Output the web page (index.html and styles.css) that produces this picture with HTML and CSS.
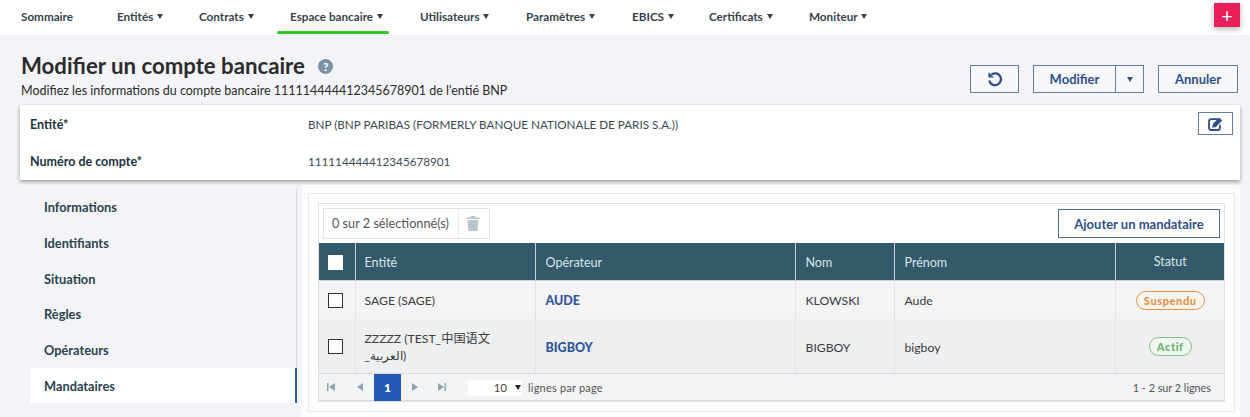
FILE: index.html
```html
<!DOCTYPE html>
<html lang="fr">
<head>
<meta charset="utf-8">
<title>Modifier un compte bancaire</title>
<link rel="stylesheet" href="styles.css">
</head>
<body>
<nav class="nav">
  <a class="nav-item nav-first">Sommaire</a>
  <a class="nav-item nav-ent">Entités <i class="tri"></i></a>
  <a class="nav-item nav-con">Contrats <i class="tri"></i></a>
  <a class="nav-item nav-esp active">Espace bancaire <i class="tri"></i></a>
  <a class="nav-item nav-uti">Utilisateurs <i class="tri"></i></a>
  <a class="nav-item nav-par">Paramètres <i class="tri"></i></a>
  <a class="nav-item nav-ebi">EBICS <i class="tri"></i></a>
  <a class="nav-item nav-cer">Certificats <i class="tri"></i></a>
  <a class="nav-item nav-mon">Moniteur <i class="tri"></i></a>
  <button class="plus" type="button">+</button>
</nav>
<header class="head">
  <div class="head-text">
    <h1 class="title">Modifier un compte bancaire <span class="help">?</span></h1>
    <p class="sub">Modifiez les informations du compte bancaire 111114444412345678901 de l'entié BNP</p>
  </div>
  <div class="actions">
    <button class="btn btn-reset" type="button" aria-label="Rétablir">
      <svg width="16" height="16" viewBox="0 0 16 16" fill="none" stroke="#2f4f86" stroke-width="2.300"><path d="M4.300 3.700A5.900 5.900 0 1 1 2.300 9.400"/><path d="M1.400 1.200l5.600 5.400H1.400z" fill="#2f4f86" stroke="none"/></svg>
    </button>
    <div class="split">
      <button class="btn btn-mod" type="button">Modifier</button>
      <button class="btn btn-caret" type="button"><i class="tri tri-blue"></i></button>
    </div>
    <button class="btn btn-ann" type="button">Annuler</button>
  </div>
</header>
<section class="card">
  <div class="card-row row-a">
    <span class="label">Entité*</span>
    <span class="value">BNP (BNP PARIBAS (FORMERLY BANQUE NATIONALE DE PARIS S.A.))</span>
    <button class="edit" type="button" aria-label="Éditer">
      <svg width="15" height="14" viewBox="0 0 15 14"><path d="M9.800 2.200H3.200C2 2.200 1 3.200 1 4.400v6.400C1 12 2 13 3.200 13h6.600c1.200 0 2.200-1 2.200-2.200V7.800" fill="none" stroke="#2f4f86" stroke-width="1.800"/><path d="M4.800 6.900L11.200.6l3 3-6.300 6.300-3.600.8z" fill="#2f4f86"/></svg>
    </button>
  </div>
  <div class="card-row row-b">
    <span class="label">Numéro de compte*</span>
    <span class="value">111114444412345678901</span>
  </div>
</section>
<main class="content">
  <aside class="side">
    <a class="side-item">Informations</a>
    <a class="side-item">Identifiants</a>
    <a class="side-item">Situation</a>
    <a class="side-item">Règles</a>
    <a class="side-item">Opérateurs</a>
    <a class="side-item current">Mandataires</a>
  </aside>
  <div class="pane">
    <div class="panel">
      <div class="grid-box">
        <div class="toolbar">
          <div class="selbox">
            <span class="seltext">0 sur 2 sélectionné(s)</span>
            <span class="seltrash">
              <svg width="14" height="15" viewBox="0 0 14 15" fill="#b9c5cc"><path d="M5 0h4l.6 1.400H13.400v1.600H.600V1.400H4.400z"/><path d="M1.600 4h10.800l-.8 10.200c0 .4-.4.800-.8.800H3.200c-.4 0-.8-.4-.8-.8z"/></svg>
            </span>
          </div>
          <button class="add" type="button">Ajouter un mandataire</button>
        </div>
        <table class="tbl">
          <thead>
            <tr>
              <th class="c-chk"><span class="chk chk-head"></span></th>
              <th class="c-ent">Entité</th>
              <th class="c-op">Opérateur</th>
              <th class="c-nom">Nom</th>
              <th class="c-pre">Prénom</th>
              <th class="c-sta">Statut</th>
            </tr>
          </thead>
          <tbody>
            <tr class="r1">
              <td class="c-chk"><span class="chk"></span></td>
              <td class="c-ent">SAGE (SAGE)</td>
              <td><a class="link">AUDE</a></td>
              <td>KLOWSKI</td>
              <td>Aude</td>
              <td class="c-sta"><span class="badge b-sus">Suspendu</span></td>
            </tr>
            <tr class="r2">
              <td class="c-chk"><span class="chk"></span></td>
              <td class="c-ent">ZZZZZ (TEST_中国语文<br>_العربية)</td>
              <td><a class="link">BIGBOY</a></td>
              <td>BIGBOY</td>
              <td>bigboy</td>
              <td class="c-sta"><span class="badge b-act">Actif</span></td>
            </tr>
          </tbody>
        </table>
        <div class="pager">
          <span class="pg pg-first"><svg width="8" height="8" viewBox="0 0 8 8" fill="#8fa3b5"><path d="M0 0h1.500v8H0zM8 0v8L2 4z"/></svg></span>
          <span class="pg"><svg width="6" height="8" viewBox="0 0 6 8" fill="#8fa3b5"><path d="M6 0v8L0 4z"/></svg></span>
          <span class="pg-cur">1</span>
          <span class="pg"><svg width="6" height="8" viewBox="0 0 6 8" fill="#8fa3b5"><path d="M0 0v8l6-4z"/></svg></span>
          <span class="pg"><svg width="8" height="8" viewBox="0 0 8 8" fill="#8fa3b5"><path d="M8 0H6.500v8H8zM0 0v8l6-4z"/></svg></span>
          <span class="size">10 <i class="tri tri-dark"></i></span>
          <span class="per">lignes par page</span>
          <span class="count">1 - 2 sur 2 lignes</span>
        </div>
      </div>
    </div>
  </div>
</main>
</body>
</html>
```
FILE: styles.css
```css
* { box-sizing: border-box; }
html, body { margin: 0; height: 417px; overflow: hidden; }
body { background: #f3f4f7; font-family: Lato, "Noto Sans CJK SC", sans-serif; color: #2b2b2b; }
a { display: block; }
button { font-family: inherit; cursor: pointer; }

.nav { height: 35px; background: #fff; display: flex; align-items: flex-start; padding-left: 21px; position: relative; }
.nav-item { font-size: 11.700px; font-weight: 700; color: #36424a; line-height: 32px; white-space: nowrap; height: 35px; position: relative; }
.nav-first { width: 96px; }
.nav-ent { width: 82px; }
.nav-con { width: 91px; }
.nav-esp { width: 130px; }
.nav-uti { width: 106px; }
.nav-par { width: 106px; }
.nav-ebi { width: 77px; }
.nav-cer { width: 100px; }
.nav-mon { width: 100px; }
.active::after { content: ""; position: absolute; left: -13px; top: 31px; width: 112px; height: 3px; background: #2ecc27; border-radius: 2px; }
.tri { display: inline-block; width: 0; height: 0; border-left: 3.700px solid transparent; border-right: 3.700px solid transparent; border-top: 5px solid #36424a; vertical-align: 2px; margin-left: 1px; }
.tri-blue { border-top-color: #2f4f86; }
.tri-dark { border-top-color: #222; margin-left: 5px; }
.plus { margin-left: auto; margin-right: 10px; margin-top: 3px; width: 26px; height: 24px; padding: 0; border: 0; background: #e91e5a; color: #fff; font-size: 20px; line-height: 22px; box-shadow: 0 2px 6px rgba(0,0,0,.3); }

.head { height: 70px; padding: 16px 12px 0 21px; display: flex; justify-content: space-between; }
.title { margin: 0; font-size: 22.200px; font-weight: 700; line-height: 30px; color: #2b2b2b; display: flex; align-items: center; white-space: pre; }
.help { display: inline-block; width: 15px; height: 15px; margin-left: 8px; border-radius: 50%; background: #7c93a6; color: #fff; font-size: 11px; font-weight: 900; line-height: 15px; text-align: center; }
.sub { margin: 1px 0 0; font-size: 12.500px; line-height: 18px; color: #2b2b2b; }
.actions { display: flex; padding-top: 14px; align-items: flex-start; }
.btn { height: 28px; background: #f6f7fa; border: 1px solid #5f7fa3; color: #2f4f86; font-size: 13px; font-weight: 700; padding: 0; display: flex; align-items: center; justify-content: center; }
.btn-reset { width: 49px; margin-right: 14px; }
.split { display: flex; margin-right: 14px; }
.btn-mod { width: 83px; }
.btn-caret { width: 28px; border-left: 0; }
.btn-ann { width: 80px; }

.card { margin: 0 10px 0 20px; height: 75px; background: #fff; box-shadow: 0 2px 4px rgba(0,0,0,.35); padding: 0 7px 0 10px; }
.card-row { display: flex; align-items: center; height: 37px; position: relative; }
.row-b { height: 38px; }
.label { width: 279px; font-size: 12.500px; font-weight: 700; color: #20333b; }
.row-a .label { padding-top: 2px; }
.value { font-size: 11.700px; color: #3a4a52; margin-left: -1px; }
.edit { margin-left: auto; width: 35px; height: 23px; padding: 0; border: 1px solid #5f7fa3; background: #fff; display: flex; align-items: center; justify-content: center; }

.content { display: flex; height: 232px; margin: 5px 10px 0 30px; }
.side { width: 267px; margin-top: 4px; border-right: 1px solid #d3d7dc; height: 214px; }
.side-item { height: 35.800px; line-height: 36px; padding-left: 14px; font-size: 12.800px; font-weight: 700; color: #2a4350; }
.current { background: #fff; border-right: 2px solid #2f5f9e; margin-right: -1px; height: 35px; line-height: 36px; }
.pane { flex: 1; margin-left: 5px; background: #fcfcfd; padding: 8px 5px 0 6px; }
.panel { height: 219px; background: #fff; border: 1px solid #e6e8eb; padding: 9px 9px 0; }
.grid-box { height: 199px; border: 1px solid #dfe2e5; background: #fff; }
.toolbar { height: 39px; display: flex; justify-content: space-between; padding: 4px 4px 0; }
.selbox { width: 167px; height: 31px; border: 1px solid #dfe2e5; display: flex; align-items: center; }
.seltext { width: 135px; padding-left: 8px; font-size: 12.700px; color: #555; border-right: 1px solid #e8eaed; line-height: 29px; white-space: nowrap; }
.seltrash { flex: 1; display: flex; justify-content: center; padding-right: 2px; }
.add { width: 162px; height: 29px; margin-top: 1px; padding: 0; border: 1px solid #4a7091; background: #fff; color: #2f4f86; font-size: 13px; font-weight: 700; }

.tbl { width: 905px; border-collapse: collapse; table-layout: fixed; }
.tbl th { height: 37px; background: #325a6b; color: #dbe4e8; font-size: 12.500px; font-weight: 400; text-align: left; padding: 2px 10px 0 10px; border-left: 1px solid #c8d6dc; border-bottom: 1px solid #c8d6dc; }
.tbl th:first-child, .tbl td:first-child { border-left: 0; }
.tbl td { font-size: 12.200px; color: #3c3c3c; padding: 2px 10px 0 10px; border-left: 1px solid #e1e3e6; line-height: 17px; }
.tbl .c-ent { padding-left: 9px; }
.r1 td { height: 39px; background: #f4f4f7; }
.r2 td { height: 54px; background: #eeeff1; }
.c-chk { width: 36px; }
.c-ent { width: 180px; }
.c-op { width: 260px; }
.c-nom { width: 99px; }
.c-pre { width: 221px; }
.c-sta { width: 109px; }
.tbl .c-chk { padding: 1px 0 0 9px; }
.tbl .c-sta { text-align: center; padding: 1px 0 0 1px; }
.chk { display: block; width: 15px; height: 15px; background: #fff; border: 1px solid #333; }
.chk-head { border-color: #fff; margin-top: 2px; }
.tbl .link { display: inline; color: #2f5597; font-weight: 900; font-size: 12.500px; }
.badge { display: inline-block; border-radius: 10px; font-size: 11px; font-weight: 900; letter-spacing: .6px; line-height: 17px; height: 19px; background: #fff; }
.b-sus { color: #e0954a; border: 1px solid #e0954a; width: 69px; background: #f8f4ee; }
.b-act { color: #6bb36b; border: 1px solid #7fbf7f; width: 43px; background: #f2f6f1; }

.pager { height: 28px; background: #f1f3f5; border-top: 1px solid #d9dcdf; border-bottom: 1px solid #d9dcdf; display: flex; align-items: center; }
.pg { width: 27px; display: flex; justify-content: center; }
.pg-first { padding-right: 3px; }
.pg-cur { width: 27px; height: 27px; background: #2459b8; color: #fff; font-size: 12px; font-weight: 900; display: flex; align-items: center; justify-content: center; margin: 0 0 0 1px; }
.size { width: 54px; height: 16px; margin-left: 13px; background: #fff; font-size: 11.500px; color: #444; text-align: right; padding-right: 1px; line-height: 16px; margin-top: 1px; }
.per { margin-left: 6px; font-size: 11px; color: #555; letter-spacing: .2px; }
.count { margin-left: auto; margin-right: 13px; font-size: 10.800px; color: #555; }
```
